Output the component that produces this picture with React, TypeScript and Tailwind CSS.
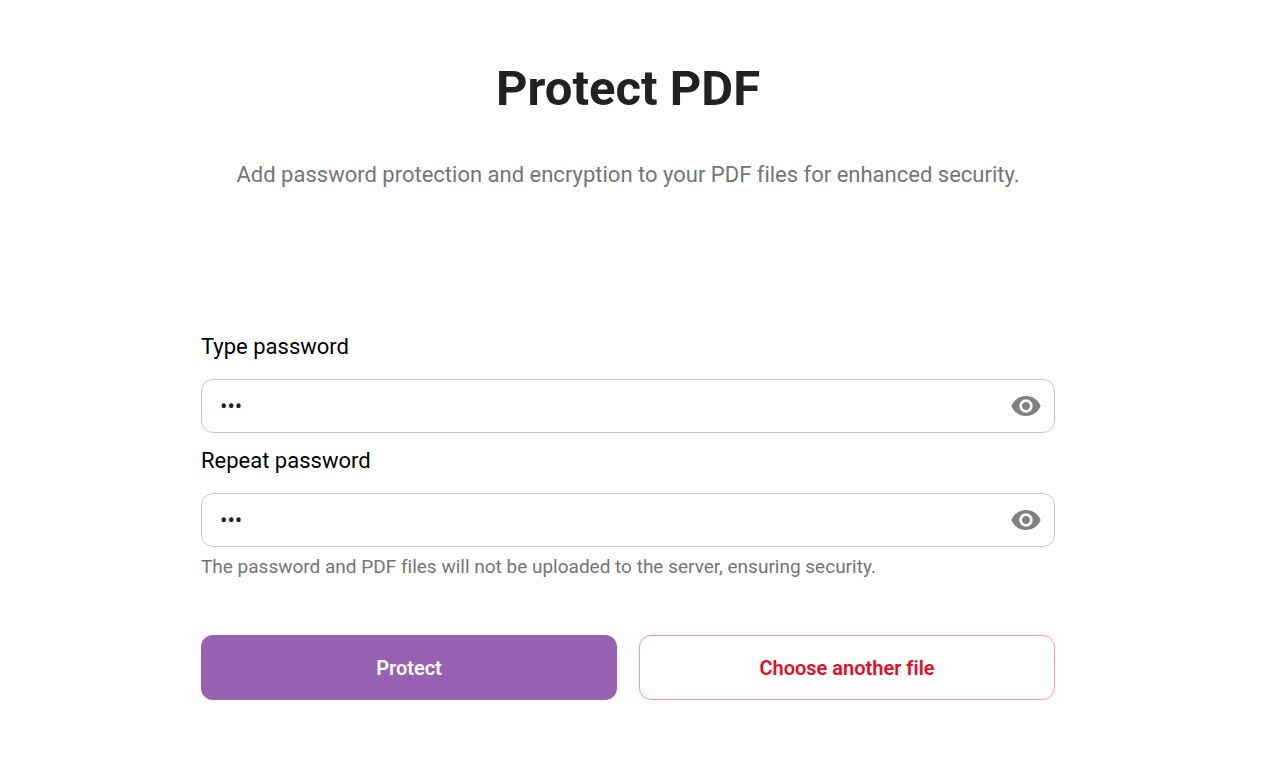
import React, { useState } from 'react';
import { MdVisibility, MdVisibilityOff } from 'react-icons/md';

interface PasswordFieldProps {
  id: string;
  label: string;
  value: string;
  onChange: (value: string) => void;
}

const PasswordField: React.FC<PasswordFieldProps> = ({ id, label, value, onChange }) => {
  const [visible, setVisible] = useState(false);

  return (
    <div>
      <label htmlFor={id} className="block text-[22px] leading-8 text-black">
        {label}
      </label>
      <div className="mt-4 flex h-[54px] items-center rounded-xl border border-[#c8c8c8] bg-white pr-3 focus-within:border-[#9861b4]">
        <input
          id={id}
          type={visible ? 'text' : 'password'}
          value={value}
          onChange={(e) => onChange(e.target.value)}
          autoComplete="new-password"
          className="h-full min-w-0 flex-1 bg-transparent pl-[18px] text-[22px] text-[#212121] outline-none"
        />
        <button
          type="button"
          onClick={() => setVisible((v) => !v)}
          aria-label={visible ? 'Hide password' : 'Show password'}
          className="shrink-0 cursor-pointer text-[#808080]"
        >
          {visible ? <MdVisibilityOff className="size-8" /> : <MdVisibility className="size-8" />}
        </button>
      </div>
    </div>
  );
};

export default function App() {
  const [password, setPassword] = useState('123');
  const [repeat, setRepeat] = useState('123');

  return (
    <main className="min-h-screen bg-white pr-[14px] font-['Roboto',sans-serif] [font-variant-ligatures:none]">
      <div className="mx-auto max-w-[854px] py-[57px]">
        <header className="text-center">
          <h1 className="text-[49px] leading-16 font-bold text-[#212121]">Protect PDF</h1>
          <p className="mt-[38px] text-[22px] leading-8 text-[#757575]">
            Add password protection and encryption to your PDF files for enhanced security.
          </p>
        </header>

        <form className="mt-[140px]" onSubmit={(e) => e.preventDefault()}>
          <div className="space-y-3">
            <PasswordField id="password" label="Type password" value={password} onChange={setPassword} />
            <PasswordField id="repeat-password" label="Repeat password" value={repeat} onChange={setRepeat} />
          </div>
          <p className="mt-1 text-[19px] leading-8 text-[#757575]">
            The password and PDF files will not be uploaded to the server, ensuring security.
          </p>

          <div className="mt-[52px] grid grid-cols-2 gap-[22px]">
            <button
              type="submit"
              className="h-[65px] cursor-pointer rounded-xl bg-[#9861b4] text-[20px] font-semibold text-white hover:bg-[#87539f]"
            >
              Protect
            </button>
            <button
              type="button"
              className="h-[65px] cursor-pointer rounded-xl border border-[#ff9494] bg-white text-[20px] font-semibold text-[#e60c23] hover:bg-red-50"
            >
              Choose another file
            </button>
          </div>
        </form>
      </div>
    </main>
  );
}
